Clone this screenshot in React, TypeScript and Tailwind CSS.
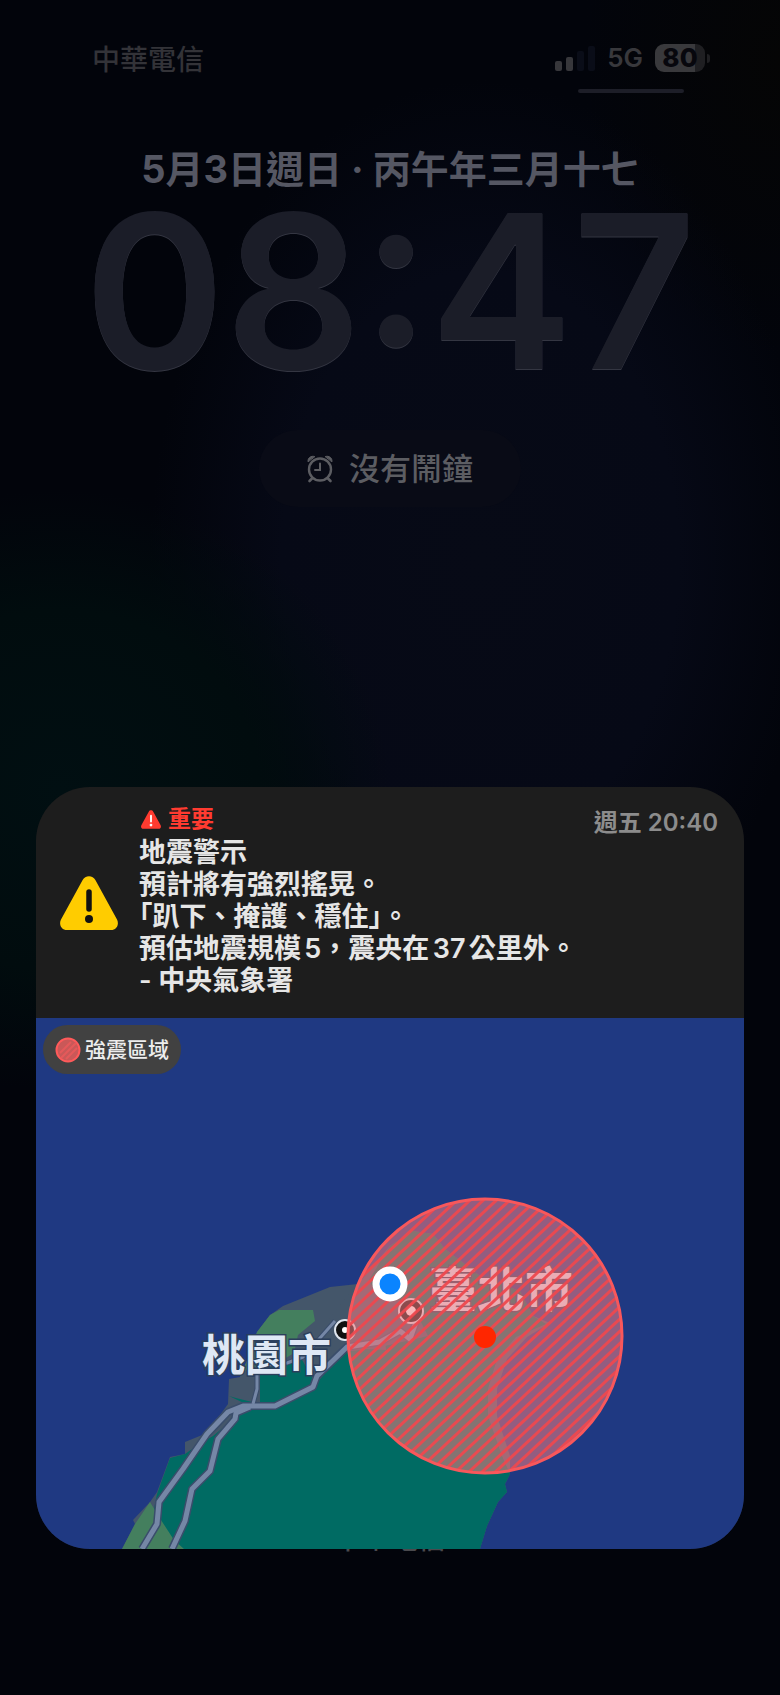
import { useId } from 'react'

const alertLines = [
  '預計將有強烈搖晃。',
  '「趴下、掩護、穩住」。',
  '預估地震規模5，震央在37公里外。',
  '- 中央氣象署',
]

function SignalIcon() {
  return (
    <svg viewBox="0 0 40 26" className="h-[26px] w-10" aria-hidden="true">
      <rect x="0" y="16" width="7" height="10" rx="2" fill="#37373b" />
      <rect x="11" y="12" width="7" height="14" rx="2" fill="#37373b" />
      <rect x="22" y="6" width="7" height="20" rx="2" fill="#0a0d18" />
      <rect x="33" y="1" width="7" height="25" rx="2" fill="#0a0d18" />
    </svg>
  )
}

function Battery() {
  return (
    <div className="flex items-center gap-[2px]">
      <div className="flex h-7 w-[50px] items-center justify-center rounded-[9px] bg-linear-to-r from-[#39393c] from-80% to-[#1f1f22] to-80% text-[26px] leading-none font-extrabold text-[#07070d]">
        80
      </div>
      <span className="h-[9px] w-[3px] rounded-r-full bg-[#1f1f22]" />
    </div>
  )
}

function AlarmIcon() {
  return (
    <svg viewBox="0 0 26 28" className="h-7 w-[26px]" fill="none" stroke="#5c5d62" strokeLinecap="round" aria-hidden="true">
      <circle cx="13" cy="14.5" r="11" strokeWidth="2.4" />
      <path d="M13 8.500v6.500H8" strokeWidth="2" />
      <path d="M5.500 23 2.500 26M20.500 23l3 3" strokeWidth="2.600" />
      <path d="M1 6.500C.5 3 4 .3 7.500 1.500ZM25 6.500C25.500 3 22 .3 18.500 1.500Z" fill="#5c5d62" strokeWidth="1" />
    </svg>
  )
}

function WarningTriangle({ className, fill, mark }: { className: string; fill: string; mark: string }) {
  return (
    <svg viewBox="0 0 58 54" className={className} aria-hidden="true">
      <path d="M22.500 4.200C25.300-1.200 32.700-1.200 35.500 4.200L57 43.500C59.500 48.500 56.500 54 51 54H7C1.500 54-1.500 48.500 1 43.500Z" fill={fill} />
      <path d="M29 16v17" stroke={mark} strokeWidth="5.500" strokeLinecap="round" />
      <circle cx="29" cy="43" r="4" fill={mark} />
    </svg>
  )
}

function QuakeMap() {
  const hatch = useId()
  return (
    <svg viewBox="0 0 708 531" className="block w-full bg-[#1f3982]" role="img" aria-label="強震區域">
      <defs>
        <pattern id={hatch} width="9" height="9" patternUnits="userSpaceOnUse" patternTransform="rotate(-43 449 318)">
          <rect width="9" height="3" fill="#ee484e" fillOpacity="0.95" />
        </pattern>
      </defs>

      {/* coast */}
      <path
        fill="#44566a"
        d="M86 531 99 506 97 502 114 484 121 474 127 458 134 439 149 436 149 424 171 415 192 386 193 361 204 359 212 340 221 314 234 297 247 288 294 269 322 266 337 248 354 228 377 213 397 216 409 231 426 244 444 258 484 273 497 298 514 305 491 319 471 341 461 371 461 398 474 438 474 456 469 466 471 474 462 484 451 508 444 531Z"
      />
      <path
        fill="#006b63"
        d="M110 531 121 476 134 440 149 436 165 425 177 418 199 400 212 387 193 378 200 380 224 386 224 350 265 340 277 361 284 361 310 330 350 332 345 285 333 262 354 228 377 213 397 216 409 231 426 244 444 258 484 273 497 298 510 306 480 319 461 341 452 371 452 398 466 438 474 456 469 466 471 474 462 484 451 508 444 531Z"
      />
      <path fill="#44566a" d="M320 267 340 268 378 290 392 318 340 330 308 334 284 361 270 330Z" />
      <path fill="#447f5e" d="M221 314 234 297 243 292 277 292 279 303 262 317 258 335 240 346 212 350 204 359 212 340Z" />
      <path fill="#447f5e" d="M86 531 99 506 114 484 125 502 138 522 148 531Z" />

      <g fill="none" strokeLinejoin="round">
        <g stroke="#3a4d6b">
          <path strokeWidth="8" d="M106 531 121 506 123 484 147 451 171 416 192 394 207 388 239 388 277 369 281 358 311 329 344 324 364 313 374 321 380 304" />
          <path strokeWidth="8" d="M136 531 149 503 156 471 174 453 182 421 199 401 200 395 214 389" />
          <path strokeWidth="5" d="M217 386 221 371 221 354 231 347 251 345 267 339 277 328 299 303" />
        </g>
        <g stroke="#7587a6">
          <path strokeWidth="5" d="M106 531 121 506 123 484 147 451 171 416 192 394 207 388 239 388 277 369 281 358 311 329 344 324 364 313 374 321 380 304" />
          <path strokeWidth="5" d="M136 531 149 503 156 471 174 453 182 421 199 401 200 395 214 389" />
          <path strokeWidth="3" d="M217 386 221 371 221 354 231 347 251 345 267 339 277 328 299 303" />
        </g>
      </g>

      <g fill="#111111" stroke="#dfe5ee" strokeWidth="2">
        <circle cx="309" cy="312" r="10" />
        <circle cx="375" cy="293" r="12" />
      </g>
      <circle cx="309" cy="312" r="3" fill="#ffffff" />
      <circle cx="375" cy="293" r="5" fill="#ffffff" />

      <g
        fill="#dfe8f5"
        stroke="#2c3f5c"
        strokeWidth="3"
        paintOrder="stroke"
        fontWeight="700"
        className="font-['Noto_Sans_CJK_TC',sans-serif]"
      >
        <text x="166" y="353" fontSize="43">桃園市</text>
        <text x="393" y="289" fontSize="48">臺北市</text>
      </g>

      {/* shaking zone */}
      <circle cx="449" cy="318" r="137" fill="#f27c80" fillOpacity="0.55" />
      <circle cx="449" cy="318" r="137" fill={`url(#${hatch})`} stroke="#f8575b" strokeWidth="3" />
      <circle cx="449" cy="319" r="11" fill="#ff2600" />

      <circle cx="354" cy="266" r="14" fill="#0a84ff" stroke="#ffffff" strokeWidth="7" />
    </svg>
  )
}

function Legend() {
  return (
    <div className="absolute top-[7px] left-[7px] flex h-[49px] items-center gap-1 rounded-full bg-[#414141] px-3">
      <svg viewBox="0 0 26 26" className="size-[26px]" aria-hidden="true">
        <circle cx="13" cy="13" r="11.500" fill="#c95858" stroke="#ff5a5a" strokeWidth="2" />
        <path d="M5 16 16 5M6 21 21 6M11 22 22 11" stroke="#e5595a" strokeWidth="2" />
      </svg>
      <span className="text-[21px] leading-none font-medium text-[#ededed]">強震區域</span>
    </div>
  )
}

export default function App() {
  return (
    <div
      lang="zh-Hant"
      className="min-h-screen bg-[#02040b] bg-[radial-gradient(ellipse_330px_300px_at_60px_790px,#010f12,#010c0e_60%,transparent),radial-gradient(ellipse_330px_480px_at_480px_560px,#070a16,#060916_60%,transparent),radial-gradient(ellipse_200px_300px_at_780px_60px,#050505,transparent)] font-['Inter','Noto_Sans_CJK_TC',sans-serif]"
    >
      <header className="flex h-[84px] items-end justify-between pr-[70px] pl-[92px] text-[#333338]">
        <span className="mb-1 text-[28px] leading-10 font-medium">中華電信</span>
        <div className="mb-3 flex items-center gap-3">
          <SignalIcon />
          <span className="text-[26px] leading-7 font-semibold text-[#38383c]">5G</span>
          <Battery />
        </div>
      </header>
      <div className="mt-[5px] mr-24 ml-auto h-1 w-[106px] rounded-full bg-[#1d1e28]" />

      <main>
        <section className="flex flex-col items-center">
          <p className="mt-[51px] text-[38px] leading-[50px] font-bold text-[#555763]">5月3日週日 · 丙午年三月十七</p>
          <time className="mt-[2px] text-[214px] leading-[192px] font-semibold text-[#1b1d28] [text-shadow:0_1px_0_#343642]">08:47</time>
          <div className="mt-[42px] flex h-[77px] items-center gap-4 rounded-full bg-[#090b16] px-12">
            <AlarmIcon />
            <span className="text-[31px] leading-none font-medium text-[#5c5d62]">沒有鬧鐘</span>
          </div>
        </section>

        <article className="relative z-10 mx-9 mt-[280px] overflow-hidden rounded-[54px] bg-[#1d1d1d]">
          <div className="flex items-start pt-4 pr-[26px] pb-[21px] pl-6">
            <WarningTriangle className="mt-[73px] mr-[21px] h-[54px] w-[58px] shrink-0" fill="#ffcc00" mark="#111111" />
            <div className="grow text-[27px] leading-8 font-semibold text-[#e6e6e6] [text-autospace:normal] [text-spacing-trim:trim-start]">
              <p className="mb-[2px] flex items-center gap-[7px] text-[23px] font-bold text-[#ff3b30]">
                <WarningTriangle className="ml-[2px] h-[19px] w-5" fill="#ff3b30" mark="#ffffff" />
                重要
              </p>
              <h1>地震警示</h1>
              {alertLines.map(line => (
                <p key={line}>{line}</p>
              ))}
            </div>
            <time className="pt-1 text-[24px] leading-8 font-semibold whitespace-nowrap text-[#8c8c8c]">週五 20:40</time>
          </div>
          <div className="relative">
            <QuakeMap />
            <Legend />
          </div>
        </article>
        <p className="-mt-[26px] pb-10 text-center text-[28px] leading-8 font-medium text-[#4a4a4e]">中華電信</p>
      </main>
    </div>
  )
}
